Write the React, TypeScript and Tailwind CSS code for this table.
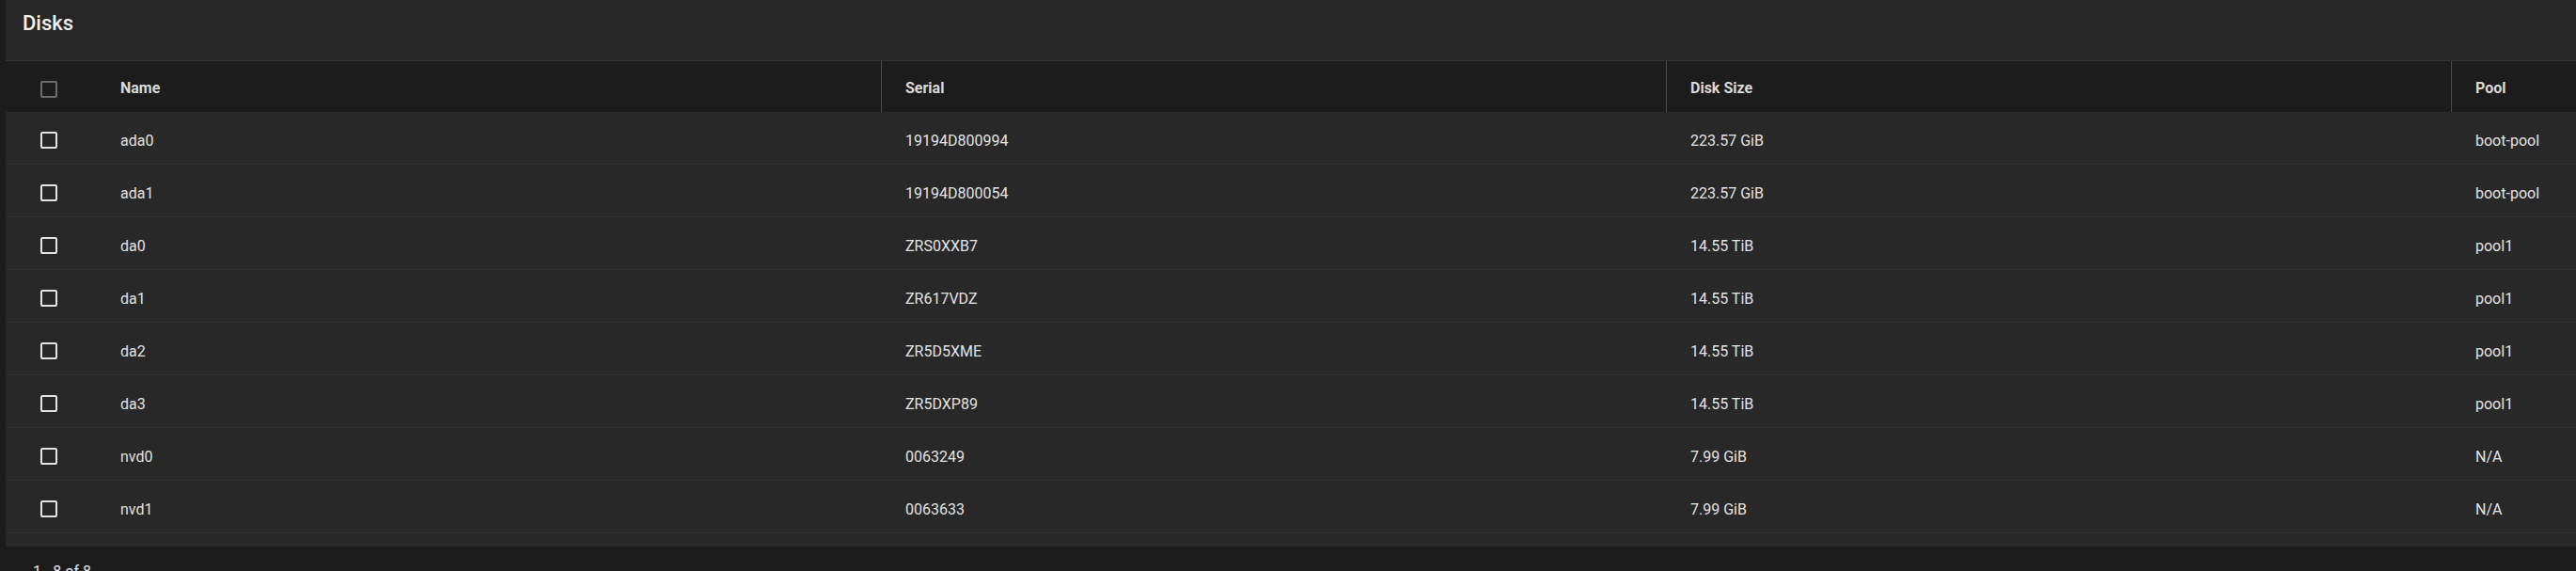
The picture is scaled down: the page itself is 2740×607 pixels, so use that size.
import React from 'react';

type Disk = {
  name: string;
  serial: string;
  size: string;
  pool: string;
};

const disks: Disk[] = [
  { name: 'ada0', serial: '19194D800994', size: '223.57 GiB', pool: 'boot-pool' },
  { name: 'ada1', serial: '19194D800054', size: '223.57 GiB', pool: 'boot-pool' },
  { name: 'da0', serial: 'ZRS0XXB7', size: '14.55 TiB', pool: 'pool1' },
  { name: 'da1', serial: 'ZR617VDZ', size: '14.55 TiB', pool: 'pool1' },
  { name: 'da2', serial: 'ZR5D5XME', size: '14.55 TiB', pool: 'pool1' },
  { name: 'da3', serial: 'ZR5DXP89', size: '14.55 TiB', pool: 'pool1' },
  { name: 'nvd0', serial: '0063249', size: '7.99 GiB', pool: 'N/A' },
  { name: 'nvd1', serial: '0063633', size: '7.99 GiB', pool: 'N/A' },
];

// same column template for header and rows
const cols = 'grid grid-cols-[96px_835px_835px_835px_1fr]';

const Checkbox: React.FC<{ muted?: boolean }> = ({ muted }) => (
  <div
    className={
      'w-[18px] h-[18px] rounded-[2px] border-2 ' +
      (muted ? 'border-[#6a6a6a]' : 'border-[#e4e4e4]')
    }
  />
);

export default function App() {
  return (
    <div
      className="w-[2740px] h-[607px] overflow-hidden bg-[#1b1b1b] text-[#e2e2e2]"
      style={{ fontFamily: 'Roboto, "Noto Sans", sans-serif' }}
    >
      <div className="ml-[6px] bg-[#262626]">
        {/* title */}
        <div className="h-[65px] border-b border-[#343434] pl-[18px] pt-[12px]">
          <h3 className="text-[22px] leading-[26px] font-medium text-[#f0f0f0]">Disks</h3>
        </div>

        {/* header */}
        <div className={cols + ' h-[54px] bg-[#1c1c1c] text-[16px] font-bold text-[#dadada]'}>
          <div className="flex items-center pl-[37px] pt-[5px]">
            <Checkbox muted />
          </div>
          <div className="flex items-center pl-[26px] pt-[4px]">Name</div>
          <div className="flex items-center border-l border-[#4a4a4a] pl-[25px] pt-[4px]">Serial</div>
          <div className="flex items-center border-l border-[#4a4a4a] pl-[25px] pt-[4px]">Disk Size</div>
          <div className="flex items-center border-l border-[#4a4a4a] pl-[25px] pt-[4px]">Pool</div>
        </div>

        {/* rows */}
        <div className="bg-[#282828] pb-[14px]">
          {disks.map((d) => (
            <div key={d.name} className={cols + ' h-[56px] border-b border-[#2f2f2f] text-[16px]'}>
              <div className="flex items-center pl-[37px] pt-[4px]">
                <Checkbox />
              </div>
              <div className="flex items-center pl-[26px] pt-[6px]">{d.name}</div>
              <div className="flex items-center pl-[26px] pt-[6px]">{d.serial}</div>
              <div className="flex items-center pl-[26px] pt-[6px]">{d.size}</div>
              <div className="flex items-center pl-[26px] pt-[6px]">{d.pool}</div>
            </div>
          ))}
        </div>
      </div>

      <div className="pl-[35px] mt-[15px] text-[16px] leading-[24px] text-[#e2e2e2]">1 - 8 of 8</div>
    </div>
  );
}
